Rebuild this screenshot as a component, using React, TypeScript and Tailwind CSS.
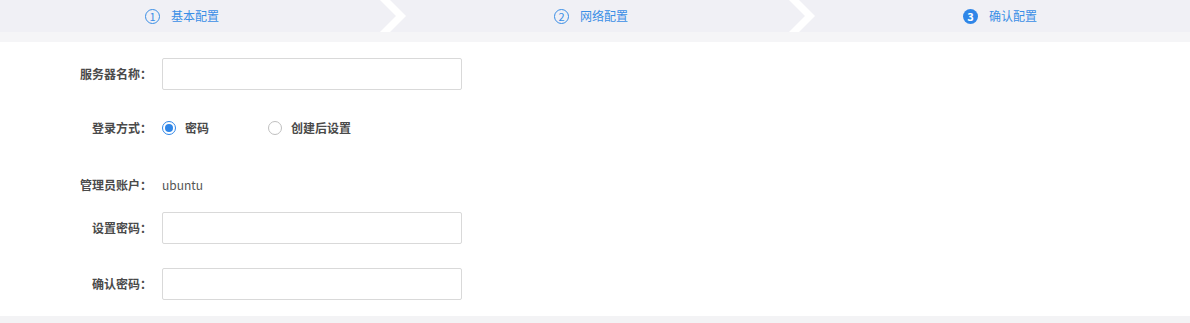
import React, { useState } from 'react';

const font = { fontFamily: '"Noto Sans CJK SC", "Liberation Sans", sans-serif' };

const steps = [
  { no: 1, title: '基本配置' },
  { no: 2, title: '网络配置' },
  { no: 3, title: '确认配置' },
];

const Chevron: React.FC = () => (
  <svg className="absolute right-[3px] top-0" width="26" height="32" viewBox="0 0 26 32">
    <polygon points="0,0 10,0 26,16 10,32 0,32 16,16" fill="#ffffff" />
  </svg>
);

const Steps: React.FC<{ current: number }> = ({ current }) => (
  <div className="flex h-8 bg-[#f0f0f5] overflow-hidden">
    {steps.map((s, i) => (
      <div key={s.no} className="relative w-[409px] shrink-0 h-8 flex items-center justify-center pr-[45px]">
        <div className="flex items-center gap-[11px] text-[12px] text-[#3a8ee6]">
          {s.no === current ? (
            <span className="w-[15px] h-[15px] rounded-full bg-[#2f86e8] text-white text-[11px] font-bold flex items-center justify-center leading-none">
              {s.no}
            </span>
          ) : (
            <span className="w-[15px] h-[15px] rounded-full border border-[#3a8ee6] text-[#3a8ee6] text-[11px] flex items-center justify-center leading-none">
              {s.no}
            </span>
          )}
          <span>{s.title}</span>
        </div>
        {i < steps.length - 1 && <Chevron />}
      </div>
    ))}
  </div>
);

const Label: React.FC<{ children: React.ReactNode }> = ({ children }) => (
  <div className="w-[152px] shrink-0 text-right text-[12px] font-semibold text-[#4a4a4a]">{children}：</div>
);

const Input: React.FC<{ type?: string }> = ({ type = 'text' }) => (
  <input
    type={type}
    className="w-[300px] h-8 px-2 rounded-[2px] border border-[#d9d9d9] bg-white outline-none text-[12px]"
  />
);

const Radio: React.FC<{ checked: boolean; label: string; onClick: () => void }> = ({ checked, label, onClick }) => (
  <button type="button" onClick={onClick} className="flex items-center gap-[9px] text-[12px] font-semibold text-[#4a4a4a]">
    <span
      className={`w-[14px] h-[14px] rounded-full border bg-white flex items-center justify-center ${
        checked ? 'border-[#2f86e8]' : 'border-[#bfbfbf]'
      }`}
    >
      {checked && <span className="w-[8px] h-[8px] rounded-full bg-[#2f86e8]" />}
    </span>
    {label}
  </button>
);

export default function App() {
  const [mode, setMode] = useState<'pwd' | 'later'>('pwd');

  return (
    <div className="w-[1190px] bg-white" style={font}>
      <Steps current={3} />
      <div className="h-[10px] bg-[#f5f5f7]" />

      <div className="pt-4 pb-4">
        <div className="flex items-center gap-[10px] h-8">
          <Label>服务器名称</Label>
          <Input />
        </div>

        <div className="flex items-center gap-[10px] h-8 mt-[22px]">
          <Label>登录方式</Label>
          <div className="flex items-center">
            <div className="w-[106px]">
              <Radio checked={mode === 'pwd'} label="密码" onClick={() => setMode('pwd')} />
            </div>
            <Radio checked={mode === 'later'} label="创建后设置" onClick={() => setMode('later')} />
          </div>
        </div>

        <div className="flex items-center gap-[10px] h-5 mt-[31px]">
          <Label>管理员账户</Label>
          <span className="text-[12px] text-[#555]">ubuntu</span>
        </div>

        <div className="flex items-center gap-[10px] h-8 mt-[17px]">
          <Label>设置密码</Label>
          <Input type="password" />
        </div>

        <div className="flex items-center gap-[10px] h-8 mt-6">
          <Label>确认密码</Label>
          <Input type="password" />
        </div>
      </div>

      <div className="h-[7px] bg-[#f3f3f5]" />
    </div>
  );
}
